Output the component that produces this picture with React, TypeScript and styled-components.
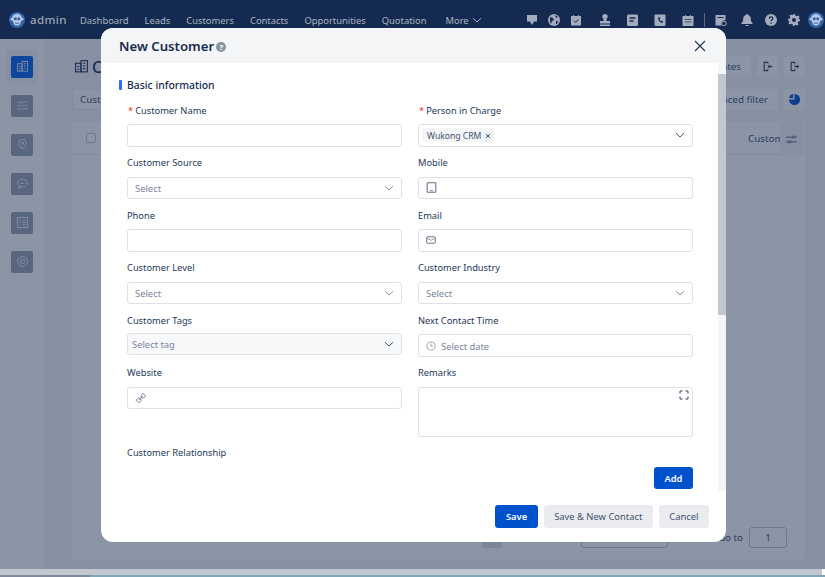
import React from "react";
import styled, { createGlobalStyle } from "styled-components";

const Global = createGlobalStyle`
  html, body { margin: 0; padding: 0; height: 100%; overflow: hidden; }
  body { font-family: "Noto Sans", "Liberation Sans", sans-serif; background: #fff; }
  * { box-sizing: border-box; }
`;

const Page = styled.div`
  position: relative; width: 825px; height: 577px; overflow: hidden;
  display: flex; flex-direction: column;
`;
const Nav = styled.header`
  height: 39px; flex: none; background: #152a50; display: flex; align-items: center;
  padding-left: 9px; color: #aab2c2;
`;
const Brand = styled.div`
  display: flex; align-items: center; gap: 5px; width: 71px; flex: none; font-size: 11.5px; font-weight: 500; letter-spacing: .4px; color: #9aa3b5;
`;
const NavLinks = styled.nav`
  display: flex; gap: 16px; flex: none; width: 402px; font-size: 9.4px; align-items: center; padding-top: 1px;
`;
const NavLink = styled.span<{ $push?: number }>`
  display: inline-flex; align-items: center; gap: 3px; margin-left: ${p => p.$push ?? 0}px;
`;
const NavTools = styled.div`
  display: flex; align-items: center; flex: none; margin-left: 44px;
`;
const NavTool = styled.span<{ $gap: number }>`
  display: inline-flex; flex: none; margin-left: ${p => p.$gap}px; color: #a3abbd;
`;
const NavDivider = styled.span`
  width: 1px; height: 14px; background: #5c6a85; margin-left: 10px;
`;

const Body = styled.div`
  position: relative; flex: 1; display: flex; background: #f4f5f7; min-height: 0;
`;
const Side = styled.aside`
  width: 44px; flex: none; background: #fff; padding: 11px 6px 0; display: flex; flex-direction: column; align-items: center;
`;
const SideSlot = styled.div<{ $active?: boolean }>`
  width: 32px; height: 33px; margin-bottom: 6px; border-radius: 3px;
  display: flex; align-items: center; justify-content: center;
  background: ${p => p.$active ? "#f4f5f7" : "transparent"};
`;
const SideIcon = styled.div<{ $active?: boolean }>`
  width: 22px; height: 22px; border-radius: 2px; display: flex; align-items: center; justify-content: center;
  background: ${p => p.$active ? "#0060f0" : "#98a0b2"}; color: ${p => p.$active ? "#e8edf5" : "#f0f2f6"};
`;
const Main = styled.main`
  flex: 1; padding: 17px 20px 9px 28px; display: flex; flex-direction: column; min-width: 0;
`;
const TitleRow = styled.div`
  display: flex; align-items: center; height: 21px; margin-bottom: 12px;
`;
const Title = styled.h1`
  display: flex; align-items: center; gap: 3px; margin: 0 0 0 2px; font-size: 16px; font-weight: 500; color: #172b4d;
`;
const Spacer = styled.div`flex: 1;`;
const GhostBtn = styled.div<{ $w?: number }>`
  width: ${p => p.$w ?? 21}px; height: 21px; border-radius: 3px; background: #fff; margin-left: 6px;
  display: flex; align-items: center; justify-content: ${p => p.$w ? "flex-end" : "center"}; padding-right: ${p => p.$w ? 10 : 0}px;
  font-size: 9.8px; color: #42526e; white-space: nowrap;
`;
const FilterRow = styled.div`
  display: flex; align-items: center; height: 21px; margin-bottom: 12px;
`;
const Search = styled.div`
  width: 120px; height: 21px; border: 1px solid #ebecf0; background: #fff; border-radius: 3px;
  font-size: 9.8px; color: #42526e; padding: 3px 0 0 7px;
`;
const Card = styled.section`
  flex: 1; background: #fff; border-radius: 3px; display: flex; flex-direction: column; position: relative;
`;
const THead = styled.div`
  height: 33px; display: flex; align-items: center; padding-left: 14px; border-bottom: 1px solid #ebecf0;
  font-size: 9.8px; color: #42526e;
`;
const Check = styled.span`
  width: 10px; height: 10px; border: 1px solid #c1c7d0; border-radius: 2px;
`;
const HeadCell = styled.span`margin-left: auto; width: 57px; white-space: nowrap; padding-top: 1px;`;
const Settings = styled.div`
  position: absolute; right: 2px; top: 1px; width: 23px; height: 32px; background: #f4f5f7;
  display: flex; align-items: center; justify-content: center; color: #42526e;
`;
const Pager = styled.div`
  margin-top: auto; height: 33px; display: flex; align-items: flex-start; padding: 0 18px 0 410px; font-size: 9.8px; color: #42526e;
`;
const PageNum = styled.div`width: 20px; height: 18px; margin-top: 3px; background: #dfe1e6; border-radius: 2px;`;
const PageSize = styled.div`width: 87px; height: 18px; margin: 3px 0 0 79px; border: 1px solid #c1c7d0; border-radius: 3px;`;
const GoLabel = styled.span`margin: 4px 6px 0 auto;`;
const GoInput = styled.div`
  width: 38px; height: 21px; border: 1px solid #c1c7d0; border-radius: 3px; display: flex; align-items: center; justify-content: center;
`;
const Strip = styled.div`
  height: 6px; flex: none; background: #c1c6d0; margin-right: 3px;
`;
const Desktop = styled.div`
  height: 2px; flex: none; background: #7fa6b4; border-left: 90px solid #7e8999;
`;

const Mask = styled.div`
  position: absolute; inset: 0; background: rgba(23, 43, 77, .5);
`;
const Modal = styled.div`
  position: absolute; left: 101px; top: 28px; width: 625px; height: 514px; background: #fff; border-radius: 12px;
  display: flex; flex-direction: column; overflow: hidden;
`;
const ModalHead = styled.div`
  height: 35px; flex: none; background: #f4f5f7; display: flex; align-items: center; padding: 0 20px 0 18px; color: #172b4d;
`;
const ModalTitle = styled.h2`
  margin: 0; font-size: 13.2px; font-weight: 600; color: #172b4d; display: flex; align-items: center; gap: 2px;
`;
const HelpDot = styled.span`
  width: 10px; height: 10px; border-radius: 50%; background: #8993a4; color: #fff; font-size: 7.5px; font-weight: 700;
  display: inline-flex; align-items: center; justify-content: center; margin-top: 2px;
`;
const Close = styled.span`margin-left: auto; display: inline-flex;`;
const ModalBody = styled.div`
  flex: none; height: 428px; display: flex; position: relative;
`;
const Content = styled.div`
  flex: 1; padding: 15px 0 0 18px; min-width: 0;
`;
const Scrollbar = styled.div`
  width: 8px; flex: none; background: #f4f5f7; padding-top: 11px;
`;
const Thumb = styled.div`
  height: 241px; background: #c1c7d0;
`;
const Section = styled.div`
  display: flex; align-items: center; gap: 5px; font-size: 10.4px; font-weight: 500; color: #172b4d; height: 14px; margin-bottom: 11.500px;
  &::before { content: ""; width: 3px; height: 10px; background: #2f6bff; border-radius: 1px; }
`;
const Grid = styled.div`
  display: grid; grid-template-columns: 275px 275px; column-gap: 16px; margin-left: 8px;
`;
const Field = styled.div<{ $h?: number }>`
  height: ${p => p.$h ?? 52.6}px;
`;
const Label = styled.div`
  font-size: 9.3px; color: #253858; height: 14px; line-height: 14px; margin-bottom: 6.500px; white-space: nowrap;
`;
const Req = styled.span`color: #de350b; margin: 0 2px 0 1px;`;
const Box = styled.div<{ $h?: number; $tinted?: boolean }>`
  position: relative; height: ${p => p.$h ?? 22.5}px; border: 1px solid #dfe1e6; border-radius: 3px;
  background: ${p => p.$tinted ? "#f7f8fa" : "#fff"}; display: flex; align-items: center; padding: 0 7px;
  font-size: 9.4px; color: #7a869a; margin-top: ${p => p.$tinted ? -1.5 : 0}px;
`;
const SelectText = styled.span<{ $left?: number }>`margin-left: ${p => p.$left ?? 0}px; padding-top: 1px;`;
const Arrow = styled.span<{ $dark?: boolean }>`
  margin-left: auto; display: inline-flex; color: ${p => p.$dark ? "#42526e" : "#8993a4"};
`;
const Tag = styled.span`
  display: inline-flex; align-items: center; gap: 4px; height: 14px; background: #f4f5f7; border-radius: 3px; padding: 1px 3px 0 5px;
  margin-left: -4px; font-size: 8.6px; color: #42526e;
`;
const Expand = styled.span`position: absolute; right: 3px; top: 2px; display: inline-flex; color: #344563;`;
const FullLabel = styled.div`
  font-size: 9.3px; color: #253858; margin: 8px 0 0 8px; height: 14px; line-height: 14px;
`;
const AddRow = styled.div`
  display: flex; justify-content: flex-end; width: 574px; margin-top: 6.500px;
`;
const PrimaryBtn = styled.button`
  height: 22.5px; padding: 0 10.500px; background: #0052cc; color: #fff; border: 0; border-radius: 3px; font: 600 9.4px "Noto Sans", sans-serif;
`;
const SecondaryBtn = styled.button`
  height: 22.5px; padding: 0 10.500px; background: #ebecf0; color: #42526e; border: 0; border-radius: 3px; font: 400 9.4px "Noto Sans", sans-serif;
`;
const Footer = styled.div`
  flex: 1; display: flex; justify-content: flex-end; align-items: center; gap: 6px; padding: 0 17px 0 0;
`;

const Chevron = ({ s = 10 }: { s?: number }) => (
  <svg width={s} height={s} viewBox="0 0 10 10" fill="none" stroke="currentColor" strokeWidth="1"><path d="M1 3.2 5 7l4-3.8" /></svg>
);
const Monkey = ({ s }: { s: number }) => (
  <svg width={s} height={s} viewBox="0 0 16 16">
    <circle cx="8" cy="8" r="8" fill="#2f62ad" />
    <circle cx="8" cy="6.800" r="5" fill="#b9c7de" />
    <circle cx="2.900" cy="7.200" r="1.400" fill="#b9c7de" /><circle cx="13.100" cy="7.200" r="1.400" fill="#b9c7de" />
    <ellipse cx="8" cy="10.800" rx="3.400" ry="2.800" fill="#b9c7de" />
    <circle cx="6.300" cy="6.800" r="1.500" fill="#2f62ad" /><circle cx="9.700" cy="6.800" r="1.500" fill="#2f62ad" />
    <path d="M6 10.800c1.300.8 2.700.8 4 0" stroke="#2f62ad" strokeWidth=".9" fill="none" />
  </svg>
);

const navIcons: { gap: number; w: number; d: React.ReactNode }[] = [
  { gap: 0, w: 12, d: <path d="M1 1h10v6.500H8L6 11 4 7.500H1z" fill="currentColor" /> },
  { gap: 10, w: 12, d: <><circle cx="6" cy="6" r="6" fill="currentColor" /><path d="M2 3l3 1 1 2-2 1-1 3-1-3zM7 1l3 2-2 1zM8 7l2 0-1 3-1 0z" fill="#152a50" /></> },
  { gap: 10, w: 12, d: <><path d="M1 2h2V1h1v1h4V1h1v1h2v9.500H1z" fill="currentColor" /><path d="M3.800 6.800 5.500 8.400 8.500 5.300" stroke="#152a50" fill="none" /></> },
  { gap: 17, w: 12, d: <path d="M6 0a2.600 2.600 0 0 1 1.500 4.800V7H11v2.500H1V7h3.500V4.800A2.600 2.600 0 0 1 6 0zM1 10.500h10V12H1z" fill="currentColor" /> },
  { gap: 16, w: 11, d: <><rect y="0.500" width="11" height="11.500" rx="1.500" fill="currentColor" /><path d="M2.500 4h6M2.500 7h4" stroke="#152a50" strokeWidth="1.300" /></> },
  { gap: 16, w: 12, d: <><rect x="0.500" y="0.500" width="11" height="11.500" rx="1" fill="currentColor" /><path d="M4 3.500c0 3 1.500 5 4.500 5.500l.500-1.500-1.500-1-.8.800c-.6-.5-1-1.200-1.200-2l.8-.6L5.300 3z" fill="#152a50" /></> },
  { gap: 16, w: 12, d: <><path d="M.500 2H3V1h1v1h4V1h1v1h2.500v10H.500z" fill="currentColor" /><path d="M3 5.500h1.500M5.300 5.500h1.500M7.600 5.500h1.500M3 8h1.500M5.300 8h1.500M7.600 8h1.500" stroke="#152a50" /></> },
];
const navIcons2: { gap: number; w: number; d: React.ReactNode }[] = [
  { gap: 10, w: 12, d: <><path d="M.500 1h10v5.500a3.500 3.500 0 0 0-4 5H.500z" fill="currentColor" /><path d="M2.500 3.500h6" stroke="#152a50" /><circle cx="9" cy="9.500" r="2.300" fill="none" stroke="currentColor" /></> },
  { gap: 14, w: 12, d: <path d="M6 0c.6 0 1 .4 1 1 2 .5 2.800 2 2.800 4 0 2 .7 3 1.700 4v1h-11V9c1-1 1.700-2 1.700-4 0-2 .8-3.500 2.800-4 0-.6.4-1 1-1zM4.500 11h3a1.500 1.500 0 0 1-3 0z" fill="currentColor" /> },
  { gap: 12, w: 12, d: <><circle cx="6" cy="6" r="6" fill="currentColor" /><path d="M4.300 4.700c0-2.300 3.500-2.300 3.500-.2 0 1.300-1.700 1.300-1.700 2.800" stroke="#152a50" strokeWidth="1.200" fill="none" /><circle cx="6.100" cy="9.200" r=".8" fill="#152a50" /></> },
  { gap: 11, w: 12, d: <><path d="M5 0h2l.4 1.700 1.300.6 1.500-.9 1.400 1.400-.9 1.500.6 1.300L12 5v2l-1.700.4-.6 1.300.9 1.500-1.400 1.400-1.500-.9-1.300.6L7 12H5l-.4-1.700-1.300-.6-1.500.9L.4 9.200l.9-1.500-.6-1.300L0 7V5l1.700-.4.6-1.300-.9-1.500L2.800.4l1.500.9 1.300-.6z" fill="currentColor" /><circle cx="6" cy="6" r="2" fill="#152a50" /></> },
];

const sideIcons: React.ReactNode[] = [
  <><rect x="1.500" y="4" width="5" height="8" fill="none" stroke="currentColor" /><rect x="6.500" y="1.500" width="6" height="10.500" fill="none" stroke="currentColor" /><path d="M8.500 4h2M8.500 6.500h2M8.500 9h2M3 7h2M3 9.500h2" stroke="currentColor" /></>,
  <path d="M1.500 4c2-2 4 1 5.500 0s3-1.500 5.500 0M1.500 7.500c2-2 4 1 5.500 0s3-1.500 5.500 0M1.500 11c2-2 4 1 5.500 0s3-1.500 5.500 0" fill="none" stroke="currentColor" />,
  <><path d="M7 1.500a4 4 0 0 1 4 4c0 2-2 3.500-2.500 5.500h-3C5 9 3 7.500 3 5.500a4 4 0 0 1 4-4z" fill="none" stroke="currentColor" /><circle cx="7" cy="5.500" r="1.200" fill="none" stroke="currentColor" /></>,
  <><ellipse cx="7" cy="6.500" rx="5.200" ry="4.200" fill="none" stroke="currentColor" /><path d="M4.500 6.800h5M3 10.500l-.5 2 3-1.500" fill="none" stroke="currentColor" /></>,
  <><rect x="1.500" y="1.500" width="11" height="11" fill="none" stroke="currentColor" /><path d="M3.500 4.500h1.500M7 4.500h3.500M3.500 7h1.500M7 7h3.500M3.500 9.500h1.500M7 9.500h3.500" stroke="currentColor" /></>,
  <><circle cx="7" cy="7" r="5.300" fill="none" stroke="currentColor" /><circle cx="7" cy="7" r="2.300" fill="none" stroke="currentColor" /></>,
];

const Ico = ({ s = 10, vb = 14, children }: { s?: number; vb?: number; children: React.ReactNode }) => (
  <svg width={s} height={s} viewBox={`0 0 ${vb} ${vb}`}>{children}</svg>
);

export default function App() {
  return (
    <Page>
      <Global />
      <Nav>
        <Brand><Monkey s={16} />admin</Brand>
        <NavLinks>
          <NavLink>Dashboard</NavLink>
          <NavLink>Leads</NavLink>
          <NavLink>Customers</NavLink>
          <NavLink>Contacts</NavLink>
          <NavLink>Opportunities</NavLink>
          <NavLink>Quotation</NavLink>
          <NavLink $push={3}>More <Chevron /></NavLink>
        </NavLinks>
        <NavTools>
          {navIcons.map((n, i) => (
            <NavTool key={i} $gap={n.gap}><svg width={n.w} height="12" viewBox={`0 0 ${n.w} 12`}>{n.d}</svg></NavTool>
          ))}
          <NavDivider />
          {navIcons2.map((n, i) => (
            <NavTool key={i} $gap={n.gap}><svg width={n.w} height="12" viewBox={`0 0 ${n.w} 12`}>{n.d}</svg></NavTool>
          ))}
          <NavTool $gap={8}><Monkey s={16} /></NavTool>
        </NavTools>
      </Nav>
      <Body>
        <Side>
          {sideIcons.map((d, i) => (
            <SideSlot key={i} $active={i === 0}>
              <SideIcon $active={i === 0}><Ico s={13}>{d}</Ico></SideIcon>
            </SideSlot>
          ))}
        </Side>
        <Main>
          <TitleRow>
            <Title><Ico s={15}><g color="#172b4d">{sideIcons[0]}</g></Ico>Customers</Title>
            <Spacer />
            <GhostBtn $w={80}>Templates</GhostBtn>
            <GhostBtn><Ico s={11}><path d="M2 1h6v3H7V2.500H3.500v9H7V10h1v3H2zM7 7l2.500-2.500V6H13v2H9.500v1.500z" fill="#344563" /></Ico></GhostBtn>
            <GhostBtn><Ico s={11}><path d="M2 1h6v3H7V2.500H3.500v9H7V10h1v3H2zM13 7l-2.500-2.500V6H7v2h3.500v1.500z" fill="#344563" /></Ico></GhostBtn>
          </TitleRow>
          <FilterRow>
            <Search>Customer</Search>
            <Spacer />
            <GhostBtn $w={100}>Advanced filter</GhostBtn>
            <GhostBtn><Ico s={13}><path d="M7 1a6 6 0 1 1-6 6h6z" fill="#0052cc" /><path d="M5.500 1.200v4.300H1.200a5 5 0 0 1 4.300-4.300z" fill="#0052cc" /></Ico></GhostBtn>
          </FilterRow>
          <Card>
            <THead><Check /><HeadCell>Custom</HeadCell></THead>
            <Settings><Ico s={11}><path d="M0 4h8M11 4h3M0 10h3M6 10h8" stroke="#344563" fill="none" /><circle cx="9.500" cy="4" r="1.500" fill="none" stroke="#344563" /><circle cx="4.500" cy="10" r="1.500" fill="none" stroke="#344563" /></Ico></Settings>
            <Pager>
              <PageNum />
              <PageSize />
              <GoLabel>Go to</GoLabel>
              <GoInput>1</GoInput>
            </Pager>
          </Card>
        </Main>
        <Mask />
      </Body>
      <Strip />
      <Desktop />
      <Modal>
        <ModalHead>
          <ModalTitle>New Customer <HelpDot>?</HelpDot></ModalTitle>
          <Close><svg width="12" height="12" viewBox="0 0 12 12" fill="none" stroke="#253858" strokeWidth="1.200"><path d="M1 1l10 10M11 1 1 11" /></svg></Close>
        </ModalHead>
        <ModalBody>
          <Content>
            <Section>Basic information</Section>
            <Grid>
              <Field><Label><Req>*</Req>Customer Name</Label><Box /></Field>
              <Field><Label><Req>*</Req>Person in Charge</Label>
                <Box><Tag>Wukong CRM <svg width="6" height="6" viewBox="0 0 6 6" stroke="#42526e"><path d="M1 1l4 4M5 1 1 5" /></svg></Tag><Arrow $dark><Chevron /></Arrow></Box>
              </Field>
              <Field><Label>Customer Source</Label><Box><SelectText>Select</SelectText><Arrow><Chevron /></Arrow></Box></Field>
              <Field><Label>Mobile</Label><Box><Ico s={11}><rect x="1.500" y="1" width="11" height="12" rx="1" fill="none" stroke="#5e6c84" strokeWidth="1.300" /><path d="M5 11h4" stroke="#5e6c84" /></Ico></Box></Field>
              <Field><Label>Phone</Label><Box /></Field>
              <Field><Label>Email</Label><Box><Ico s={10}><rect x="1" y="2.500" width="12" height="9" rx="1" fill="none" stroke="#5e6c84" strokeWidth="1.300" /><path d="M1.500 4.500 7 7.500l5.500-3" fill="none" stroke="#5e6c84" /></Ico></Box></Field>
              <Field><Label>Customer Level</Label><Box><SelectText>Select</SelectText><Arrow><Chevron /></Arrow></Box></Field>
              <Field><Label>Customer Industry</Label><Box><SelectText>Select</SelectText><Arrow><Chevron /></Arrow></Box></Field>
              <Field><Label>Customer Tags</Label><Box $tinted><SelectText $left={-3}>Select tag</SelectText><Arrow $dark><Chevron /></Arrow></Box></Field>
              <Field><Label>Next Contact Time</Label><Box><Ico s={10}><circle cx="7" cy="7" r="5.700" fill="none" stroke="#7a869a" /><path d="M7 3.500V7.300h3" fill="none" stroke="#7a869a" /></Ico><SelectText $left={5}>Select date</SelectText></Box></Field>
              <Field $h={72}><Label>Website</Label><Box><Ico s={12}><path d="M1.500 9.500l3-3 3 3-3 3zM6.500 4.500l3-3 3 3-3 3zM5 9l4-4" fill="none" stroke="#5e6c84" /></Ico></Box></Field>
              <Field $h={72}><Label>Remarks</Label><Box $h={50}><Expand><svg width="10" height="10" viewBox="0 0 10 10" fill="none" stroke="currentColor"><path d="M1 3.500V1h2.500M6.500 1H9v2.500M9 6.500V9H6.500M3.500 9H1V6.500" /></svg></Expand></Box></Field>
            </Grid>
            <FullLabel>Customer Relationship</FullLabel>
            <AddRow><PrimaryBtn>Add</PrimaryBtn></AddRow>
          </Content>
          <Scrollbar><Thumb /></Scrollbar>
        </ModalBody>
        <Footer>
          <PrimaryBtn>Save</PrimaryBtn>
          <SecondaryBtn>Save &amp; New Contact</SecondaryBtn>
          <SecondaryBtn>Cancel</SecondaryBtn>
        </Footer>
      </Modal>
    </Page>
  );
}
